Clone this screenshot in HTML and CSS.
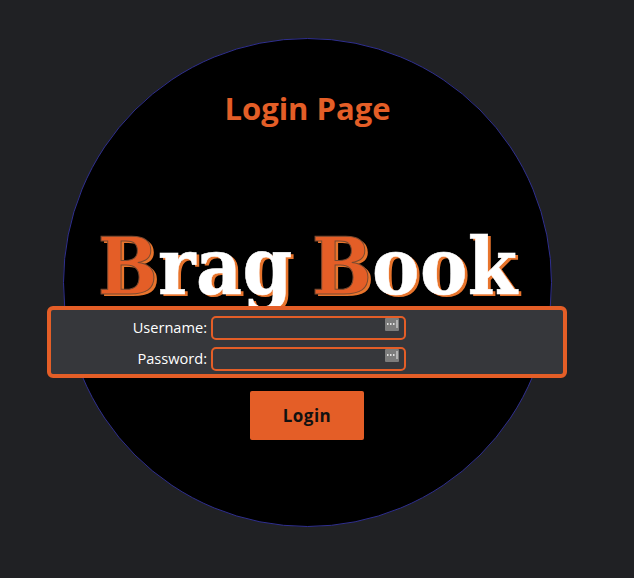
FILE: index.html
```html
<!DOCTYPE html>
<html lang="en">
<head>
    <meta charset="UTF-8">
    <meta name="viewport" content="width=device-width, initial-scale=1.0">
    <title>Login Page</title>
    <link rel="stylesheet" href="styles.css">
</head>
<body>
    <main class="circle">
        <h1 class="page-title">Login Page</h1>
        <div class="brand"><span class="brand-cap">B</span>rag <span class="brand-cap">B</span>ook</div>
        <form class="login-form">
            <div class="login-fields">
                <label class="field-label" for="username">Username:</label>
                <div class="field-box">
                    <input class="field-input" id="username" type="text">
                    <svg class="key-icon" viewBox="0 0 14 13" aria-hidden="true">
                        <rect width="14" height="13" rx="1" fill="#7c7c7c"/>
                        <path d="M2 6h1.500M5 6h1.500M8 6h1.500" stroke="#fff" stroke-width="1.500"/>
                        <path d="M12 2v8" stroke="#e8e8e8"/>
                    </svg>
                </div>
                <label class="field-label" for="password">Password:</label>
                <div class="field-box">
                    <input class="field-input" id="password" type="password">
                    <svg class="key-icon" viewBox="0 0 14 13" aria-hidden="true">
                        <rect width="14" height="13" rx="1" fill="#7c7c7c"/>
                        <path d="M2 6h1.500M5 6h1.500M8 6h1.500" stroke="#fff" stroke-width="1.500"/>
                        <path d="M12 2v8" stroke="#e8e8e8"/>
                    </svg>
                </div>
            </div>
            <button class="login-button" type="button">Login</button>
        </form>
    </main>
</body>
</html>
```

FILE: styles.css
```css
body {
    margin: 0;
    height: 578px;
    overflow: hidden;
    background: #202124;
    font-family: "Open Sans", sans-serif;
}

/* Round black backdrop, panel is allowed to stick out of it */
.circle {
    box-sizing: border-box;
    width: 489px;
    height: 489px;
    margin: 38px 0 0 63px;
    border: 1px solid #2f2f8f;
    border-radius: 50%;
    background: #000;
    display: flex;
    flex-direction: column;
    align-items: center;
}

.page-title {
    margin: 47px 0 0;
    font-size: 31px;
    line-height: 44px;
    font-weight: 700;
    color: #e45e27;
}

.brand {
    margin-top: 87px;
    height: 89px;
    font-family: "DejaVu Serif", serif;
    font-stretch: condensed;
    font-size: 79px;
    line-height: 100px;
    font-weight: 700;
    letter-spacing: 0.4px;
    word-spacing: -6px;
    white-space: nowrap;
    color: #fff;
    -webkit-text-stroke: 0.5px #fff;
    text-shadow: 3px 2px 0 #e8742c;
}

.brand-cap {
    color: #e45e27;
    -webkit-text-stroke: 1px #7a4a30;
}

.login-form {
    display: flex;
    flex-direction: column;
    align-items: center;
    margin-right: 1px;
}

.login-fields {
    box-sizing: border-box;
    width: 520px;
    height: 72px;
    padding: 5px 0 0 0;
    background: #36373b;
    border: 4px solid #e45e27;
    border-radius: 6px;
    display: grid;
    grid-template-columns: 156px 194px;
    grid-auto-rows: 24px;
    row-gap: 7px;
    column-gap: 5px;
    align-items: center;
}

.field-label {
    text-align: right;
    font-size: 14.600px;
    color: #fff;
}

.field-box {
    position: relative;
    height: 24px;
    margin-left: -1px;
}

.field-input {
    box-sizing: border-box;
    width: 100%;
    height: 100%;
    padding: 0 4px;
    background: #36373b;
    border: 2px solid #e45e27;
    border-radius: 5px;
    color: #fff;
    outline: none;
}

.key-icon {
    position: absolute;
    top: 3px;
    right: 7px;
    width: 14px;
    height: 13px;
}

.login-button {
    width: 114px;
    height: 49px;
    margin-top: 13px;
    background: #e45e27;
    border: none;
    border-radius: 2px;
    font-family: "Open Sans", sans-serif;
    font-size: 17px;
    font-weight: 700;
    letter-spacing: 0.5px;
    color: #111;
}
```
